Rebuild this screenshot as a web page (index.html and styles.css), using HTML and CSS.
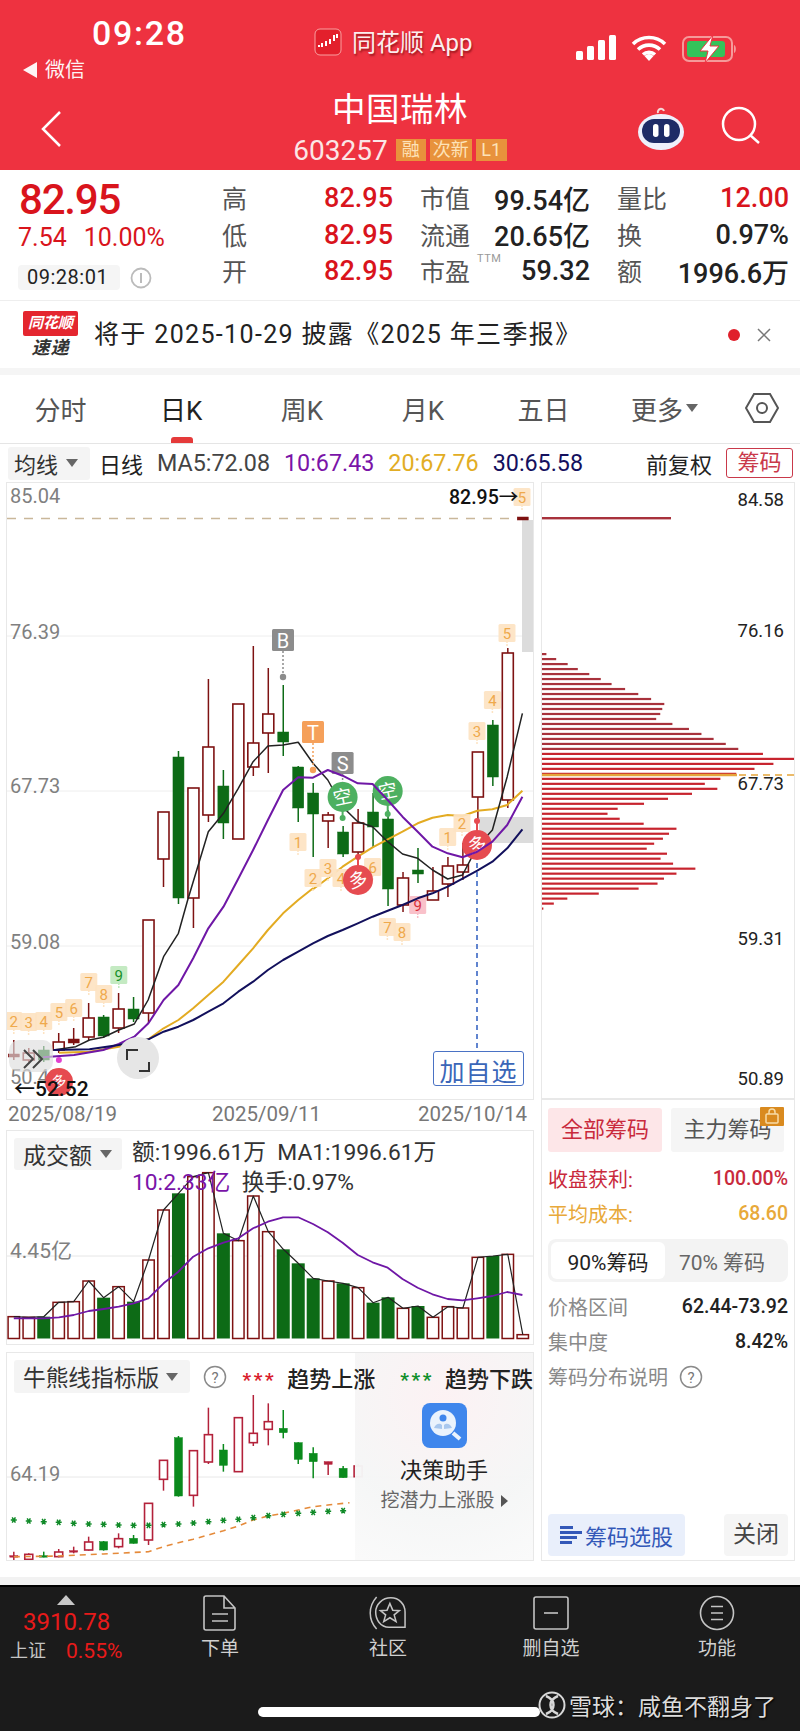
FILE: index.html
```html
<!DOCTYPE html>
<html lang="zh-CN">
<head>
<meta charset="utf-8">
<title>中国瑞林</title>
<link rel="stylesheet" href="styles.css">
</head>
<body>
<div class="screen">
  <header class="top">
    <div class="status">
      <div class="status-left">
        <div class="clock">09:28</div>
        <div class="backapp"><span class="back-tri"></span>微信</div>
      </div>
      <div class="app">
        <svg class="app-logo" viewBox="0 0 28 28" width="28" height="28"><rect x="1" y="1" width="26" height="26" rx="5" fill="#e3202c" stroke="#f9a0a0"/><path d="M4 18h2M8 15v4M12 13v5M16 11v5M20 7v6M23 6v4" stroke="#fff" stroke-width="2"/></svg>
        <span class="app-name">同花顺 App</span>
      </div>
      <div class="sys">
        <svg viewBox="0 0 40 25" width="40" height="25"><rect x="0" y="16" width="7" height="9" rx="1.5" fill="#fff"/><rect x="11" y="11" width="7" height="14" rx="1.5" fill="#fff"/><rect x="22" y="5" width="7" height="20" rx="1.5" fill="#fff"/><rect x="33" y="0" width="7" height="25" rx="1.5" fill="#fff"/></svg>
        <svg viewBox="0 0 36 26" width="36" height="26"><path d="M2 9a23 23 0 0 1 32 0M7 14.500a16 16 0 0 1 22 0M12 19.500a9 9 0 0 1 12 0" fill="none" stroke="#fff" stroke-width="3.600"/><path d="M18 26l-4.500-5a6 6 0 0 1 9 0z" fill="#fff"/></svg>
        <svg viewBox="0 0 56 28" width="56" height="28"><rect x="1" y="2" width="49" height="24" rx="6" fill="none" stroke="#f59a9a" stroke-width="2"/><rect x="5" y="6" width="38" height="16" rx="3" fill="#35c25a"/><path d="M52 10c2.500 1 2.500 7 0 8z" fill="#f59a9a"/><path d="M31 0L18 16h8l-3 12 14-17h-9z" fill="#fff" stroke="#ee3240"/></svg>
      </div>
    </div>
    <div class="nav">
      <svg class="nav-back" viewBox="0 0 24 38" width="24" height="38"><path d="M20 2L3 19l17 17" fill="none" stroke="#fff" stroke-width="2.500"/></svg>
      <div class="nav-title">
        <div class="stock-name">中国瑞林</div>
        <div class="stock-code"><span class="code">603257</span><span class="tag t1">融</span><span class="tag t2">次新</span><span class="tag t3">L1</span></div>
      </div>
      <div class="nav-right">
        <svg viewBox="0 0 48 44" width="48" height="44"><path d="M21 7a3 3 0 1 1 6-2" fill="none" stroke="#f5d9d9" stroke-width="2"/><ellipse cx="24" cy="26" rx="23" ry="18" fill="#eef0fb"/><rect x="5" y="13" width="38" height="24" rx="12" fill="#1d2b66"/><rect x="16" y="18" width="5.500" height="13" rx="2.700" fill="#fff"/><rect x="27" y="18" width="5.500" height="13" rx="2.700" fill="#fff"/></svg>
        <svg viewBox="0 0 40 38" width="40" height="38"><circle cx="18" cy="18" r="16" fill="none" stroke="#fff" stroke-width="2.500"/><path d="M29 29l9 8" stroke="#fff" stroke-width="2.500"/></svg>
      </div>
    </div>
  </header>

  <section class="quote">
    <div class="quote-main">
      <div class="price">82.95</div>
      <div class="change"><span>7.54</span><span>10.00%</span></div>
      <div class="quote-time"><span class="time-pill">09:28:01</span>
        <svg viewBox="0 0 22 22" width="22" height="22"><circle cx="11" cy="11" r="9.500" fill="none" stroke="#bbb" stroke-width="1.800"/><path d="M11 6v10" stroke="#bbb" stroke-width="2"/></svg>
      </div>
    </div>
    <div class="stats">
      <div class="stat"><span class="k">高</span><b class="up">82.95</b></div>
      <div class="stat"><span class="k">市值</span><b>99.54亿</b></div>
      <div class="stat"><span class="k">量比</span><b class="up">12.00</b></div>
      <div class="stat"><span class="k">低</span><b class="up">82.95</b></div>
      <div class="stat"><span class="k">流通</span><b>20.65亿</b></div>
      <div class="stat"><span class="k">换</span><b>0.97%</b></div>
      <div class="stat"><span class="k">开</span><b class="up">82.95</b></div>
      <div class="stat"><span class="k">市盈<sup class="ttm">TTM</sup></span><b>59.32</b></div>
      <div class="stat"><span class="k">额</span><b>1996.6万</b></div>
    </div>
  </section>

  <section class="notice">
    <div class="notice-logo"><span class="flag">同花顺</span><span class="sudi">速递</span></div>
    <div class="notice-text">将于 2025-10-29 披露《2025 年三季报》</div>
    <span class="notice-dot"></span>
    <svg class="notice-x" viewBox="0 0 14 14" width="14" height="14"><path d="M1 1l12 12M13 1L1 13" stroke="#777" stroke-width="1.500"/></svg>
  </section>
  <div class="band"></div>

  <nav class="tabs">
    <span class="tab">分时</span>
    <span class="tab active">日K</span>
    <span class="tab">周K</span>
    <span class="tab">月K</span>
    <span class="tab">五日</span>
    <span class="tab">更多<i class="caret"></i></span>
    <span class="tab"><svg viewBox="0 0 34 32" width="34" height="32"><path d="M9 2h16l8 14-8 14H9L1 16z" fill="none" stroke="#555" stroke-width="2"/><circle cx="17" cy="16" r="5" fill="none" stroke="#555" stroke-width="2"/></svg></span>
  </nav>

  <div class="ma-row">
    <span class="drop ma-drop">均线<i class="caret"></i></span>
    <span class="ma-day">日线</span>
    <span class="ma ma5">MA5:72.08</span>
    <span class="ma ma10">10:67.43</span>
    <span class="ma ma20">20:67.76</span>
    <span class="ma ma30">30:65.58</span>
    <span class="fq">前复权</span>
    <span class="chip-btn">筹码</span>
  </div>

  <main class="board">
    <div class="col-left">
      <div class="panel price-panel">
        <svg id="price" viewBox="7 483 526 616" width="526" height="616"></svg>
        <button class="addfav">加自选</button>
      </div>
      <div class="dates"><span>2025/08/19</span><span>2025/09/11</span><span>2025/10/14</span></div>
      <div class="panel vol-panel">
        <svg id="vol" viewBox="7 1131 526 213" width="526" height="213"></svg>
        <div class="vol-head">
          <span class="drop vol-drop">成交额<i class="caret"></i></span>
          <div class="vol-info">
            <div class="vol-line">额:1996.61万&nbsp; MA1:1996.61万</div>
            <div class="vol-line"><span class="purple">10:2.33亿</span>&nbsp; 换手:0.97%</div>
          </div>
        </div>
      </div>
      <div class="panel bull-panel">
        <svg id="bull" viewBox="7 1353 526 207" width="526" height="207"></svg>
        <aside class="helper">
          <svg viewBox="0 0 45 45" width="45" height="45"><rect width="45" height="45" rx="8" fill="#3f86ec"/><circle cx="21" cy="20" r="13" fill="#eaf3fd"/><circle cx="21" cy="15" r="3.500" fill="#3f86ec"/><path d="M12 25c2-5 6-5 8-3v4zM30 25c-2-5-6-5-8-3v4z" fill="#a9c8ee"/><path d="M31 30l7 6" stroke="#eaf3fd" stroke-width="4"/></svg>
          <div class="helper-t">决策助手</div>
          <div class="helper-s">挖潜力上涨股<i class="tri-r"></i></div>
        </aside>
        <div class="bull-head">
          <span class="drop bull-drop">牛熊线指标版<i class="caret"></i></span>
          <svg viewBox="0 0 24 24" width="24" height="24"><circle cx="12" cy="12" r="10.500" fill="none" stroke="#8a8a8a" stroke-width="1.500"/><text x="12" y="17.500" class="q">?</text></svg>
          <span class="stars red">***</span><b class="legend">趋势上涨</b>
          <span class="stars green">***</span><b class="legend">趋势下跌</b>
        </div>
      </div>
    </div>
    <div class="col-right">
      <div class="panel chip-panel"><svg id="chip" viewBox="542 483 252 615" width="252" height="615"></svg></div>
      <div class="panel side">
        <div class="side-tabs">
          <span class="side-tab on">全部筹码</span>
          <span class="side-tab">主力筹码<svg class="lock" viewBox="0 0 24 19" width="24" height="19"><rect width="24" height="19" rx="1" fill="#d98a1f"/><rect x="6" y="7" width="12" height="9" rx="1" fill="none" stroke="#f7dca8" stroke-width="1.500"/><path d="M9 7V5a3 3 0 0 1 6 0v2" fill="none" stroke="#f7dca8" stroke-width="1.500"/></svg></span>
        </div>
        <div class="side-row red-row"><span>收盘获利:</span><b>100.00%</b></div>
        <div class="side-row gold-row"><span>平均成本:</span><b>68.60</b></div>
        <div class="toggle"><span class="tg on">90%筹码</span><span class="tg">70% 筹码</span></div>
        <div class="side-row info"><span>价格区间</span><b>62.44-73.92</b></div>
        <div class="side-row info"><span>集中度</span><b>8.42%</b></div>
        <div class="side-row info explain"><span>筹码分布说明</span>
          <svg viewBox="0 0 24 24" width="24" height="24"><circle cx="12" cy="12" r="10.500" fill="none" stroke="#8a8a8a" stroke-width="1.500"/><text x="12" y="17.500" class="q">?</text></svg>
        </div>
        <div class="side-actions">
          <span class="pick"><svg viewBox="0 0 22 22" width="22" height="22"><path d="M0 3.500h13M0 8.500h22M0 13.500h17M0 18.500h12" stroke="#3358b8" stroke-width="3"/></svg>筹码选股</span>
          <span class="closebtn">关闭</span>
        </div>
      </div>
    </div>
  </main>

  <div class="foot-gap"></div>
  <footer class="foot">
    <div class="index">
      <span class="index-tri"></span>
      <div class="index-val">3910.78</div>
      <div class="index-row"><span>上证</span><b>0.55%</b></div>
    </div>
    <div class="foot-item">
      <svg viewBox="0 0 34 36" width="34" height="36"><path d="M3 1h18l11 12v20a2 2 0 0 1-2 2H3a2 2 0 0 1-2-2V3a2 2 0 0 1 2-2zM21 1v12h11M9 19h16M9 26h16" fill="none" stroke="#c4c4c4" stroke-width="1.600"/></svg>
      <span>下单</span>
    </div>
    <div class="foot-item">
      <svg viewBox="0 0 40 38" width="40" height="38"><path d="M8 2C-1 12-1 26 8 36" fill="none" stroke="#c4c4c4" stroke-width="1.600"/><path d="M23 3c9 0 15 7 15 15v16H21C12 34 7 26 7 18S14 3 23 3z" fill="none" stroke="#c4c4c4" stroke-width="1.600"/><path d="M22 9l3 7 7 .5-5.500 4.500 2 7-6.500-4-6.500 4 2-7L12 16.500l7-.5z" fill="none" stroke="#c4c4c4" stroke-width="1.600"/></svg>
      <span>社区</span>
    </div>
    <div class="foot-item">
      <svg viewBox="0 0 36 34" width="36" height="34"><rect x="1" y="1" width="34" height="32" rx="2" fill="none" stroke="#c4c4c4" stroke-width="1.600"/><path d="M11 17h14" stroke="#c4c4c4" stroke-width="1.600"/></svg>
      <span>删自选</span>
    </div>
    <div class="foot-item">
      <svg viewBox="0 0 36 36" width="36" height="36"><circle cx="18" cy="18" r="16.500" fill="none" stroke="#c4c4c4" stroke-width="1.600"/><path d="M12 11.500h12M12 18h12M12 24.500h12" stroke="#c4c4c4" stroke-width="1.600"/></svg>
      <span>功能</span>
    </div>
    <div class="home-bar"></div>
    <div class="mark">
      <svg viewBox="0 0 28 30" width="28" height="30"><circle cx="14" cy="15" r="12.500" fill="#1b1b1b" stroke="#d8d8d8" stroke-width="2"/><path d="M8 6c10 4 10 14 0 18M20 6C10 10 10 20 20 24" fill="none" stroke="#d8d8d8" stroke-width="2.500"/></svg>
      <span>雪球：咸鱼不翻身了</span>
    </div>
  </footer>
</div>
<script src="chart.js"></script>
</body>
</html>
```

FILE: styles.css
```css
* { box-sizing: border-box; }
html, body { margin: 0; padding: 0; background: #fff; }
body { font-family: Roboto, "Noto Sans CJK SC", sans-serif; color: #222; }
.screen { width: 800px; height: 1731px; overflow: hidden; display: flex; flex-direction: column; }
svg { display: block; flex: none; }
svg text { font-family: Roboto, "Noto Sans CJK SC", sans-serif; }
i { font-style: normal; }

.top { height: 170px; background: #ee3240; color: #fff; flex: none; }
.status { height: 86px; display: grid; grid-template-columns: 314px 262px 1fr; }
.status-left { padding: 13px 0 0 23px; }
.clock { margin-left: 69px; font-size: 34px; line-height: 40px; font-weight: 500; letter-spacing: 1.700px; }
.backapp { display: flex; align-items: center; gap: 8px; font-size: 20px; line-height: 28px; margin-top: 3px; opacity: .95; }
.back-tri { width: 0; height: 0; border: 8px solid transparent; border-left: 0; border-right: 14px solid #fff; }
.app { display: flex; align-items: flex-start; padding-top: 28px; gap: 10px; }
.app-name { font-size: 24px; line-height: 30px; text-shadow: 1px 2px 2px rgba(90,0,0,.55); color: #fbeeee; }
.sys { display: flex; gap: 15px; padding-top: 35px; align-items: flex-start; }
.nav { height: 84px; display: grid; grid-template-columns: 1fr auto 1fr; }
.nav-back { margin: 24px 0 0 40px; }
.nav-title { display: flex; flex-direction: column; align-items: center; padding-top: 4px; }
.stock-name { font-size: 33.500px; line-height: 40px; letter-spacing: .5px; }
.stock-code { display: flex; align-items: center; gap: 4px; margin-top: 9px; height: 22px; }
.code { font-size: 28px; margin-right: 4px; color: #fbe6e6; }
.tag { background: #e8923c; color: #fde2b8; font-size: 18px; line-height: 22px; text-align: center; }
.t1 { width: 30px; }
.t2 { width: 42px; }
.t3 { width: 31px; }
.nav-right { display: flex; justify-content: flex-end; gap: 36px; padding: 20px 39px 0 0; align-items: flex-start; }

.quote { height: 130px; display: flex; flex: none; }
.quote-main { width: 222px; padding: 7px 0 0 19px; }
.price { font-size: 42px; line-height: 46px; font-weight: 500; color: #d9141c; letter-spacing: -1.200px; }
.change { display: flex; gap: 17px; font-size: 25px; line-height: 28px; color: #d9141c; margin-top: 1px; margin-left: -1px; }
.quote-time { display: flex; align-items: center; gap: 10px; margin-top: 13px; margin-left: -1px; }
.time-pill { background: #f5f5f5; border-radius: 4px; padding: 0 0 0 9px; width: 102px; font-size: 20px; line-height: 25px; color: #222; letter-spacing: .5px; white-space: nowrap; }
.stats { width: 567px; display: grid; grid-template-columns: 171px 170px 172px; column-gap: 27px; grid-auto-rows: 36.500px; padding-top: 10px; }
.stat { display: flex; justify-content: space-between; align-items: center; font-size: 25px; white-space: nowrap; }
.stat b { font-weight: 500; font-size: 27px; color: #222; }
.stat b.up { color: #d9141c; }
.k { color: #555; position: relative; top: -1px; }
.ttm { position: absolute; left: 57px; top: 1px; font-size: 11px; line-height: 12px; color: #999; letter-spacing: .5px; }

.notice { height: 68px; border-top: 1px solid #eee; display: flex; align-items: center; padding-left: 23px; flex: none; }
.notice-logo { width: 55px; display: flex; flex-direction: column; align-items: center; }
.flag { width: 55px; background: #e4262f; color: #fff; font-size: 15px; line-height: 25px; font-weight: 700; font-style: italic; text-align: center; white-space: nowrap; border-radius: 2px; }
.sudi { font-size: 18px; line-height: 22px; font-weight: 700; font-style: italic; color: #333; letter-spacing: 1px; margin-top: 1px; }
.notice-text { margin-left: 16px; padding-bottom: 5px; font-size: 25px; color: #222; white-space: nowrap; letter-spacing: 1.350px; }
.notice-dot { margin-left: auto; width: 12px; height: 12px; border-radius: 50%; background: #e0202c; }
.notice-x { margin: 0 29px 0 17px; }
.band { height: 7px; background: #f5f5f5; flex: none; }

.tabs { height: 69px; border-bottom: 1px solid #e5e5e5; display: grid; grid-template-columns: repeat(6, 120.800px) 1fr; flex: none; }
.tab { position: relative; display: flex; align-items: center; justify-content: center; font-size: 26px; color: #555; padding-bottom: 2px; }
.tab.active { color: #222; }
.tab.active::after { content: ""; position: absolute; left: 50px; bottom: 0; width: 22px; height: 6px; border-radius: 3px 3px 0 0; background: #e53a3a; }
.caret { display: inline-block; width: 0; height: 0; border: 6px solid transparent; border-top: 8px solid #666; border-bottom: 0; margin-left: 3px; }

.ma-row { height: 38px; display: flex; align-items: center; padding: 0 7px 0 8px; font-size: 22px; flex: none; white-space: nowrap; }
.drop { background: #f4f4f4; border-radius: 3px; display: inline-flex; align-items: center; color: #333; font-size: 22px; }
.ma-drop { width: 82px; height: 33px; padding-left: 6px; }
.ma-drop .caret { margin-left: 8px; }
.ma-day { margin-left: 9px; color: #222; }
.ma { margin-left: 14px; font-size: 23.300px; }
.ma-day + .ma { margin-left: 14px; }
.ma5 { color: #444; }
.ma10 { color: #7a14a8; }
.ma20 { color: #e2ad24; }
.ma30 { color: #14105e; }
.fq { margin-left: auto; color: #222; }
.chip-btn { margin-left: 14px; width: 67px; height: 30px; line-height: 27px; text-align: center; border: 1px solid #c9394a; border-radius: 3px; color: #c9394a; }

.board { height: 1079px; display: grid; grid-template-columns: 528px 254px; column-gap: 7px; padding-left: 6px; flex: none; }
.col-left, .col-right { display: flex; flex-direction: column; }
.panel { border: 1px solid #e8e8e8; position: relative; flex: none; }
.price-panel { height: 618px; }
.addfav { position: absolute; left: 426px; top: 568px; width: 91px; height: 35px; padding: 0; background: #fff; border: 1px solid #4a72c4; border-radius: 3px; color: #3a66b8; font: 25px Roboto, "Noto Sans CJK SC", sans-serif; letter-spacing: 1px; }
.dates { height: 30px; padding-left: 2px; display: grid; grid-template-columns: 204px 206px 1fr; font-size: 20.500px; line-height: 29px; color: #777; flex: none; }
.vol-panel { height: 215px; margin-bottom: 7px; }
.vol-head { position: absolute; left: 7px; top: 7px; display: flex; gap: 10px; }
.vol-drop { width: 108px; height: 32px; padding-left: 9px; font-size: 23px; }
.vol-drop .caret { margin-left: 8px; }
.vol-info { font-size: 22.800px; color: #333; white-space: nowrap; }
.vol-line { line-height: 30px; height: 30px; }
.purple { color: #7a14a8; }
.bull-panel { height: 209px; overflow: hidden; }
.bull-head { position: absolute; left: 7px; top: 7px; right: 0; display: flex; align-items: center; white-space: nowrap; }
.bull-drop { width: 176px; height: 33px; padding-left: 9px; font-size: 22.700px; }
.bull-drop .caret { margin-left: 7px; }
.bull-head svg { margin-left: 13px; }
.q { font-size: 15px; fill: #777; text-anchor: middle; }
.stars { font-size: 19px; font-weight: 700; line-height: 22px; padding-top: 6px; letter-spacing: 2.600px; }
.stars.red { margin-left: 16px; color: #d91c2c; }
.stars.green { margin-left: 25px; color: #0f8f2a; }
.legend { font-size: 22px; font-weight: 500; color: #222; margin-left: 11px; }
.helper { position: absolute; left: 348px; top: 0; bottom: 0; width: 178px; display: flex; flex-direction: column; align-items: center; padding-top: 50px; background: radial-gradient(circle at 50% 22%, rgba(252,241,243,.97), rgba(245,246,246,.97) 60%, rgba(250,250,250,.97) 100%); }
.helper-t { font-size: 22px; line-height: 30px; color: #222; margin-top: 8px; }
.helper-s { font-size: 19px; line-height: 28px; color: #666; display: flex; align-items: center; margin-top: 1px; }
.tri-r { width: 0; height: 0; border: 6px solid transparent; border-right: 0; border-left: 7px solid #555; margin-left: 6px; }

.chip-panel { height: 617px; }
.side { height: 462px; padding: 8px 6px 4px 6px; display: flex; flex-direction: column; }
.side-tabs { display: flex; gap: 9px; }
.side-tab { position: relative; width: 113px; height: 44px; border-radius: 3px; background: #f5f5f5; color: #555; font-size: 22px; line-height: 43px; text-align: center; white-space: nowrap; }
.side-tab.on { width: 114px; background: #fde6e8; color: #c92a3c; }
.lock { position: absolute; right: 0; top: -1px; }
.side-row { display: flex; justify-content: space-between; align-items: center; height: 35px; font-size: 20px; white-space: nowrap; }
.side-row b { font-weight: 500; font-size: 19.500px; }
.red-row { margin-top: 9px; color: #c92a3c; }
.gold-row { color: #e8a93a; }
.toggle { display: flex; margin-top: 8px; margin-bottom: 7px; height: 43px; padding: 3px; background: #f3f3f3; border-radius: 8px; }
.tg { display: flex; align-items: center; justify-content: center; width: 114px; border-radius: 6px; font-size: 21px; color: #666; white-space: nowrap; }
.tg.on { background: #fff; color: #222; }
.info { color: #8a8a8a; }
.info b { color: #222; }
.explain { justify-content: flex-start; gap: 11px; }
.side-actions { margin-top: auto; display: flex; justify-content: space-between; padding-right: 0; }
.pick { width: 137px; height: 42px; display: flex; align-items: center; justify-content: center; gap: 3px; background: #e9effb; border-radius: 4px; color: #3358b8; font-size: 22px; white-space: nowrap; }
.closebtn { width: 64px; height: 42px; line-height: 41px; text-align: center; background: #f5f5f5; border-radius: 4px; color: #444; font-size: 23px; }

.foot-gap { height: 24px; background: linear-gradient(#fff 66%, #f2f2f2 66%); flex: none; }
.foot { position: relative; flex: 1; background: #1b1b1b; border-top: 2px solid #000; display: grid; grid-template-columns: 132px 176px 160px 166px 166px; align-items: start; }
.index { padding: 8px 0 0 10px; position: relative; }
.index-tri { display: block; width: 0; height: 0; margin-left: 47px; border: 9px solid transparent; border-top: 0; border-bottom: 10px solid #c8c8c8; }
.index-val { margin-left: 13px; font-size: 24px; line-height: 30px; color: #e81a1a; margin-top: 2px; }
.index-row { display: flex; gap: 20px; align-items: center; font-size: 18px; line-height: 28px; color: #c4c4c4; }
.index-row b { font-size: 21px; font-weight: 400; color: #e81a1a; }
.foot-item { display: flex; flex-direction: column; align-items: center; padding-top: 8px; color: #d0d0d0; font-size: 19px; line-height: 26px; height: 80px; }
.foot-item svg { height: 36px; }
.foot-item span { margin-top: 5px; }
.home-bar { position: absolute; left: 258px; top: 120px; width: 282px; height: 10px; border-radius: 5px; background: #fff; }
.mark { position: absolute; left: 538px; top: 101px; display: flex; align-items: center; gap: 3px; font-size: 23px; color: #dcdcdc; white-space: nowrap; text-shadow: 1px 1px 2px #000; }
```

FILE: chart.js
```js
var NS = 'http://www.w3.org/2000/svg';
function el(p, tag, a, txt) {
  var n = document.createElementNS(NS, tag);
  for (var k in a) n.setAttribute(k, a[k]);
  if (txt !== undefined) n.textContent = txt;
  p.appendChild(n);
  return n;
}
function xi(i) { return 13.8 + 14.97 * i; }
function pts(list, xs, ox, oy) {
  return list.map(function (p) { return (p[0] / xs).toFixed(1) + ',' + (oy + p[1] / 3).toFixed(1); });
}
function line(p, d, color, w, dash) {
  var a = { points: d.join(' '), fill: 'none', stroke: color, 'stroke-width': w, 'stroke-linejoin': 'round' };
  if (dash) a['stroke-dasharray'] = dash;
  el(p, 'polyline', a);
}
function candle(p, i, c, s) {
  var x = xi(i), col = c[4] === 'g' ? s.green : s.red;
  if (c[0] !== null) {
    el(p, 'line', { x1: x, x2: x, y1: c[0], y2: c[3], stroke: col, 'stroke-width': s.wick });
  }
  var fill = c[4] === 'r' ? '#fff' : col;
  el(p, 'rect', { x: x - s.w / 2, y: c[1], width: s.w, height: Math.max(c[2] - c[1], 1.5), fill: fill, stroke: col, 'stroke-width': c[4] === 'r' ? s.sw : 0.5 });
}

/* ---------- price chart ---------- */
var P = document.getElementById('price');
[636, 791, 946].forEach(function (y) { el(P, 'line', { x1: 7, x2: 533, y1: y, y2: y, stroke: '#eeeeee' }); });
el(P, 'line', { x1: 7, x2: 518, y1: 518.500, y2: 518.500, stroke: '#c9b79a', 'stroke-width': 1.500, 'stroke-dasharray': '9 8' });
/* scroll-like bands */
el(P, 'rect', { x: 522, y: 520, width: 11, height: 132, fill: '#dcdcdc' });
el(P, 'rect', { x: 479, y: 817, width: 54, height: 26, fill: '#dcdcdc' });

[['85.04', 503], ['76.39', 639], ['67.73', 793], ['59.08', 949], ['50.42', 1084]].forEach(function (t) {
  el(P, 'text', { x: 10, y: t[1] - 0, fill: '#808080', 'font-size': 20 }, t[0]);
});

var priceData = [
  [1040, 1054, 1057, 1060, 'f'], [1048, 1053, 1060, 1062, 'r'], [1046, 1050, 1060, 1062, 'g'],
  [1033, 1042, 1050, 1053, 'r'], [1028, 1039, 1043, 1045, 'f'], [1003, 1018, 1037, 1040, 'r'],
  [1015, 1017, 1036, 1038, 'g'], [993, 1009, 1028, 1033, 'r'], [997, 1009, 1019, 1022, 'g'],
  [920, 920, 1013, 1023, 'r'], [812, 812, 859, 887, 'r'], [751, 757, 898, 904, 'g'],
  [788, 788, 898, 928, 'r'], [679, 747, 815, 822, 'r'], [770, 786, 823, 839, 'g'],
  [704, 704, 839, 839, 'r'], [646, 743, 767, 776, 'r'], [668, 714, 733, 773, 'r'],
  [685, 732, 742, 756, 'g'], [766, 767, 808, 822, 'g'], [783, 793, 814, 857, 'g'],
  [812, 815, 821, 848, 'r'], [826, 832, 854, 857, 'g'], [809, 823, 852, 857, 'r'],
  [793, 812, 827, 847, 'g'], [810, 819, 889, 906, 'g'], [872, 878, 905, 912, 'r'],
  [848, 870, 874, 883, 'g'], [867, 891, 900, 900, 'r'], [857, 866, 884, 897, 'r'],
  [843, 865, 872, 880, 'r'], [752, 752, 797, 820, 'r'], [720, 725, 777, 786, 'g'],
  [648, 653, 800, 808, 'r'], [517, 517, 520, 520, 'f']
];
var pStyle = { green: '#0d6b16', red: '#7e1212', w: 11, wick: 1.500, sw: 1.600 };
priceData.forEach(function (c, i) { candle(P, i, c, pStyle); });

function both(a, b) { return pts(a, 2.904, 0, 880).concat(pts(b, 2.904, 0, 600)); }
line(P, both([[171, 518], [260, 515], [345, 500], [431, 478], [475, 445], [518, 420], [561, 385], [605, 345], [649, 305], [692, 255], [735, 205], [778, 150], [822, 100], [866, 60], [909, 25]],
  [[909, 868], [952, 835], [995, 800], [1039, 770], [1082, 742], [1126, 718], [1169, 695], [1213, 670], [1256, 653], [1300, 645], [1343, 648], [1386, 632], [1430, 628], [1473, 615], [1517, 572]]), '#e3ab22', 2);
line(P, both([[155, 510], [220, 500], [260, 480], [300, 472], [345, 450], [390, 432], [430, 360], [475, 230], [518, 160], [545, 60]],
  [[605, 695], [649, 640], [692, 565], [735, 485], [778, 438], [822, 435], [866, 427], [909, 490], [952, 540], [995, 620], [1039, 665], [1082, 680], [1126, 725], [1169, 762], [1213, 775], [1256, 810], [1300, 837], [1343, 825], [1386, 740], [1430, 690], [1473, 530], [1517, 340]]), '#222', 1.500);

/* tags */
function tag(x, y, t, bg, fg) {
  el(P, 'line', { x1: x, x2: x, y1: y + 8, y2: y + 14, stroke: bg, 'stroke-width': 1.500, 'stroke-dasharray': '2 1' });
  el(P, 'rect', { x: x - 8.500, y: y - 9, width: 17, height: 18, rx: 1.500, fill: bg, opacity: .92 });
  el(P, 'text', { x: x, y: y + 5.500, 'text-anchor': 'middle', 'font-size': 15, fill: fg }, t);
}
var PE = '#fde3c2', OR = '#efa94c';
[[298, 842, '1'], [313, 878, '2'], [328, 868, '3'], [341, 878, '4'], [372.6, 867, '6'], [387.4, 927, '7'], [402, 932, '8'],
 [447.7, 837, '1'], [462, 823, '2'], [477, 731, '3'], [492.4, 700, '4'], [507, 633, '5'], [522, 497, '5'],
 [13.8, 1021, '2'], [28.6, 1022, '3'], [43.7, 1021, '4'], [58.9, 1012, '5'], [73.7, 1008, '6'], [88.8, 982, '7'], [103.7, 994, '8']
].forEach(function (t) { tag(t[0], t[1], t[2], PE, OR); });
tag(417.7, 905, '9', '#f8bcc6', '#d8303c');
tag(118.8, 975, '9', '#bfe8bd', '#17902a');

function letter(x, y, t, bg, dotY) {
  el(P, 'line', { x1: x, x2: x, y1: y + 11, y2: dotY, stroke: bg, 'stroke-width': 1.500, 'stroke-dasharray': '2 2' });
  el(P, 'circle', { cx: x, cy: dotY, r: 3.200, fill: bg });
  el(P, 'rect', { x: x - 11, y: y - 11, width: 22, height: 22, rx: 1.500, fill: bg });
  el(P, 'text', { x: x, y: y + 7.500, 'text-anchor': 'middle', 'font-size': 20, fill: '#fff' }, t);
}
letter(283, 640, 'B', '#8c8c8c', 677);
letter(313, 732, 'T', '#f5a05a', 770);
letter(342.600, 763, 'S', '#8c8c8c', 785);

function ball(x, y, r, t, bg, dotY) {
  el(P, 'circle', { cx: x, cy: dotY, r: 3, fill: bg });
  el(P, 'line', { x1: x, x2: x, y1: dotY, y2: y, stroke: bg, 'stroke-width': 2 });
  el(P, 'circle', { cx: x, cy: y, r: r, fill: bg });
  el(P, 'text', { x: x, y: y + r * .45, 'text-anchor': 'middle', 'font-size': r * 1.250, fill: '#fff', transform: 'rotate(-12 ' + x + ' ' + y + ')' }, t);
}
ball(342.600, 797, 15, '空', '#4db060', 818);
ball(387.700, 791, 15, '空', '#4db060', 814);
ball(358, 880, 15, '多', '#e64b50', 857);
ball(477, 845, 15, '多', '#e64b50', 821);

/* MA10 and MA30 draw above the balls */
line(P, both([[125, 532], [215, 525], [300, 510], [345, 492], [390, 470], [431, 430], [475, 360], [518, 315], [561, 235], [605, 145], [649, 80], [690, 0]],
  [[735, 750], [778, 660], [822, 570], [866, 532], [909, 533], [952, 510], [995, 527], [1039, 550], [1082, 552], [1126, 600], [1169, 650], [1213, 695], [1256, 740], [1300, 760], [1343, 772], [1386, 755], [1430, 725], [1473, 675], [1517, 590]]), '#6f17a6', 2);
line(P, both([[155, 510], [260, 508], [345, 495], [431, 478], [475, 455], [518, 440], [561, 420], [605, 395], [649, 370], [692, 335], [735, 305], [778, 270], [822, 240], [866, 215], [909, 190], [952, 168], [995, 150], [1039, 130], [1082, 110], [1126, 92], [1169, 75], [1213, 55], [1256, 40], [1300, 20]],
  [[1386, 812], [1430, 785], [1473, 745], [1517, 688]]), '#12105c', 2);

/* blue guide */
el(P, 'line', { x1: 477, x2: 477, y1: 863, y2: 1048, stroke: '#3a66c4', 'stroke-width': 1.600, 'stroke-dasharray': '5 4' });

/* last price */
el(P, 'text', { x: 449, y: 504, 'font-size': 19.500, 'font-weight': 500, fill: '#111' }, '82.95→');

/* bottom-left overlays */
el(P, 'rect', { x: 9, y: 1040, width: 44, height: 32, rx: 10, fill: '#dddddd', opacity: .65 });
el(P, 'circle', { cx: 58.900, cy: 1060, r: 3, fill: '#e040d0' });
el(P, 'circle', { cx: 59, cy: 1082, r: 14, fill: '#e64b50' });
el(P, 'text', { x: 59, y: 1087, 'text-anchor': 'middle', 'font-size': 15, fill: '#fff', transform: 'rotate(-12 59 1082)' }, '多');
el(P, 'path', { d: 'M24 1050l9 9-9 9M33 1050l9 9-9 9', fill: 'none', stroke: '#444', 'stroke-width': 2 });
el(P, 'circle', { cx: 138, cy: 1058, r: 21, fill: '#e6e6e6' });
el(P, 'path', { d: 'M127 1060v-10h11M139 1071h10v-9', fill: 'none', stroke: '#333', 'stroke-width': 2 });
el(P, 'text', { x: 14, y: 1096, 'font-size': 21, 'font-weight': 500, fill: '#111' }, '←52.52');

/* ---------- chip distribution ---------- */
var C = document.getElementById('chip');
el(C, 'rect', { x: 542, y: 517, width: 129, height: 2.400, fill: '#a8323c' });
var ends = [50, 79, 113, 143, 177, 211, 243, 283, 322, 360, 399, 393, 387, 375, 423, 472, 509, 545, 581, 618, 691, 787, 722, 666, 612, 565, 519, 556, 481, 410, 339, 261, 231, 267, 338, 435, 413, 395, 369, 347, 407, 388, 425, 491, 435, 398, 379, 323, 205, 112, 72, 41];
ends.forEach(function (e, i) {
  var y = 654 + i * 4.990;
  el(C, 'rect', { x: 542, y: y - 1, width: (e - 37) / 2.960, height: 2.200, fill: i < 20 ? '#a8323c' : '#c7242e' });
});
el(C, 'line', { x1: 542, x2: 737, y1: 775, y2: 775, stroke: '#e5a53a', 'stroke-width': 2.400 });
el(C, 'line', { x1: 739, x2: 795, y1: 775, y2: 775, stroke: '#e5a53a', 'stroke-width': 1.600, 'stroke-dasharray': '7 5' });
[['84.58', 506], ['76.16', 637], ['67.73', 790], ['59.31', 945], ['50.89', 1085]].forEach(function (t) {
  el(C, 'text', { x: 784, y: t[1], 'text-anchor': 'end', 'font-size': 18.500, fill: '#222' }, t[0]);
});

/* ---------- volume ---------- */
var V = document.getElementById('vol');
el(V, 'line', { x1: 7, x2: 533, y1: 1256, y2: 1256, stroke: '#e6e6e6' });
var vols = [[590, 'r'], [592, 'r'], [590, 'g'], [547, 'r'], [545, 'r'], [483, 'r'], [533, 'g'], [500, 'r'], [545, 'g'], [420, 'r'], [270, 'r'], [220, 'g'], [170, 'r'], [158, 'r'], [340, 'g'], [362, 'r'], [228, 'r'], [335, 'r'], [388, 'g'], [430, 'g'], [475, 'g'], [483, 'r'], [490, 'g'], [503, 'r'], [548, 'g'], [532, 'g'], [565, 'r'], [558, 'g'], [592, 'r'], [560, 'r'], [564, 'r'], [412, 'r'], [408, 'g'], [403, 'r'], [644, 'r']];
var vBottom = 1338.500;
vols.forEach(function (v, i) {
  var y = 1120 + v[0] / 3, x = xi(i);
  if (v[1] === 'g') el(V, 'rect', { x: x - 6.500, y: y, width: 13, height: vBottom - y, fill: '#0d6b16' });
  else el(V, 'rect', { x: x - 5.700, y: y, width: 11.400, height: vBottom - y, fill: '#fff', stroke: '#7e1212', 'stroke-width': 1.500 });
});
line(V, vols.map(function (v, i) { return xi(i).toFixed(1) + ',' + (1120 + v[0] / 3).toFixed(1); }), '#222', 1.200);
line(V, pts([[40, 595], [127, 595], [171, 592], [214, 585], [258, 573], [301, 567], [345, 560], [388, 550], [431, 535], [475, 490], [518, 455], [561, 410], [605, 385], [649, 368], [692, 355], [735, 325], [778, 305], [822, 292], [866, 292], [909, 312], [952, 337], [995, 368], [1039, 405], [1082, 427], [1126, 443], [1169, 477], [1213, 503], [1256, 523], [1300, 537], [1343, 541], [1386, 535], [1430, 528], [1473, 516], [1517, 525]], 2.904, 0, 1120), '#6f17a6', 1.800);
el(V, 'text', { x: 10, y: 1258, 'font-size': 21, fill: '#808080' }, '4.45亿');

/* ---------- bull / bear ---------- */
var B = document.getElementById('bull');
el(B, 'line', { x1: 7, x2: 533, y1: 1477, y2: 1477, stroke: '#e8e8e8' });
el(B, 'text', { x: 10, y: 1481, 'font-size': 20, fill: '#808080' }, '64.19');
function by(z) { return 1340 + z / 3; }
var bullData = [
  [635, 647, 650, 660, 'f'], [640, 643, 658, 658, 'r'], [635, 647, 650, 652, 'g'], [627, 636, 650, 652, 'r'], [620, 632, 636, 640, 'f'],
  [590, 606, 630, 632, 'r'], [603, 605, 630, 632, 'g'], [580, 596, 620, 625, 'r'], [585, 595, 610, 611, 'g'], [490, 490, 600, 615, 'r'],
  [361, 361, 418, 452, 'r'], [288, 293, 468, 470, 'g'], [332, 332, 466, 500, 'r'], [203, 284, 366, 372, 'r'], [312, 330, 376, 395, 'g'],
  [233, 233, 395, 395, 'r'], [165, 280, 308, 318, 'r'], [190, 245, 268, 316, 'r'], [210, 265, 278, 295, 'g'], [307, 308, 358, 372, 'g'],
  [322, 340, 365, 415, 'g'], [365, 365, 373, 405, 'f'], [378, 385, 413, 413, 'g'], [372, 378, 410, 412, 'r']
];
var bStyle = { green: '#0a8a1c', red: '#b3213a', w: 8, wick: 1.500, sw: 1.600 };
bullData.forEach(function (c, i) {
  candle(B, i, [by(c[0]), by(c[1]), by(c[2]), by(c[3]), c[4]], bStyle);
});
line(B, pts([[40, 650], [171, 648], [300, 642], [431, 635], [475, 620], [518, 608], [561, 598], [605, 585], [649, 572], [692, 558], [735, 540], [778, 528], [822, 520], [866, 510], [909, 500], [952, 495], [1015, 488]], 2.904, 0, 1340), '#e58a3a', 1.600, '6 5');
[540, 543, 545, 547, 550, 552, 553, 555, 556, 556, 554, 552, 549, 545, 541, 538, 533, 527, 523, 520, 517, 514, 512].forEach(function (z, i) {
  var x = xi(i), y = by(z);
  el(B, 'path', { d: 'M' + (x - 3) + ' ' + y + 'h6M' + (x - 1.600) + ' ' + (y - 2.700) + 'l3.200 5.400M' + (x + 1.600) + ' ' + (y - 2.700) + 'l-3.200 5.400', stroke: '#108a28', 'stroke-width': 1.500, fill: 'none' });
});
```
